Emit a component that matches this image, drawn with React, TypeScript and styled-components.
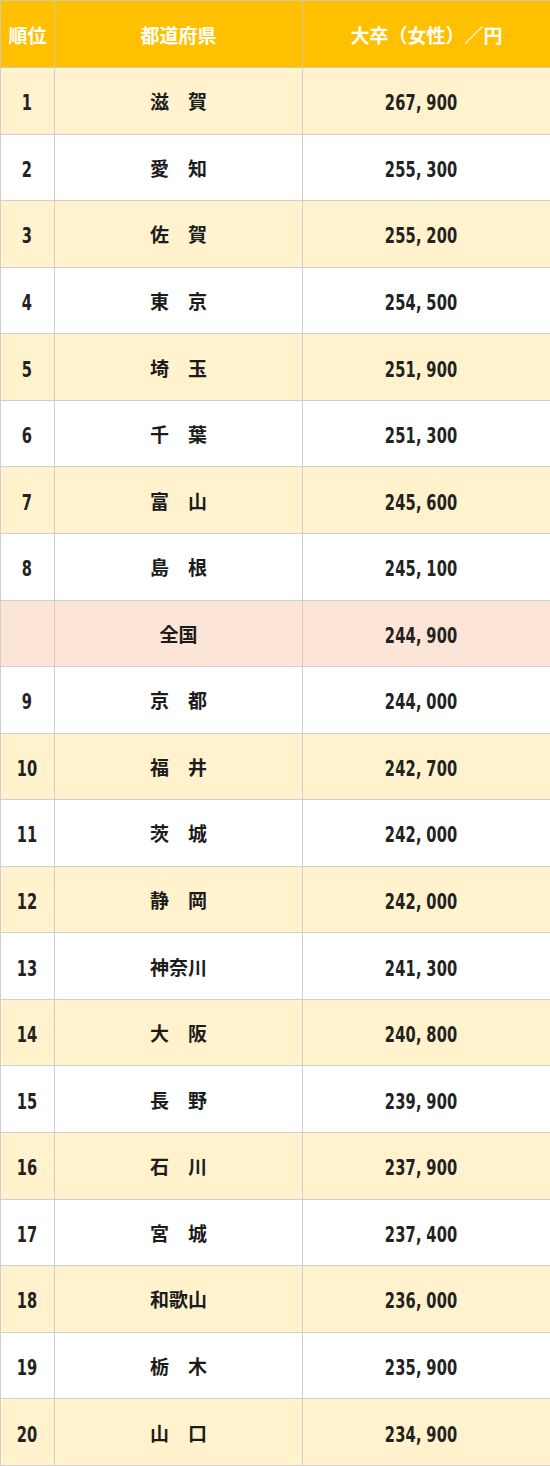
import React from 'react';
import styled, { createGlobalStyle } from 'styled-components';

const GlobalStyle = createGlobalStyle`
  html, body {
    margin: 0;
    padding: 0;
    background: #fff;
  }
`;

type Row = { rank: string; pref: string; salary: string; national?: boolean };

const rows: Row[] = [
  { rank: '1', pref: '滋　賀', salary: '267,900' },
  { rank: '2', pref: '愛　知', salary: '255,300' },
  { rank: '3', pref: '佐　賀', salary: '255,200' },
  { rank: '4', pref: '東　京', salary: '254,500' },
  { rank: '5', pref: '埼　玉', salary: '251,900' },
  { rank: '6', pref: '千　葉', salary: '251,300' },
  { rank: '7', pref: '富　山', salary: '245,600' },
  { rank: '8', pref: '島　根', salary: '245,100' },
  { rank: '', pref: '全国', salary: '244,900', national: true },
  { rank: '9', pref: '京　都', salary: '244,000' },
  { rank: '10', pref: '福　井', salary: '242,700' },
  { rank: '11', pref: '茨　城', salary: '242,000' },
  { rank: '12', pref: '静　岡', salary: '242,000' },
  { rank: '13', pref: '神奈川', salary: '241,300' },
  { rank: '14', pref: '大　阪', salary: '240,800' },
  { rank: '15', pref: '長　野', salary: '239,900' },
  { rank: '16', pref: '石　川', salary: '237,900' },
  { rank: '17', pref: '宮　城', salary: '237,400' },
  { rank: '18', pref: '和歌山', salary: '236,000' },
  { rank: '19', pref: '栃　木', salary: '235,900' },
  { rank: '20', pref: '山　口', salary: '234,900' },
];

const Table = styled.table`
  width: 550px;
  height: 1466px;
  border-collapse: collapse;
  table-layout: fixed;
`;

const HeadCell = styled.th`
  background: #ffc000;
  color: #fff;
  font-family: 'Noto Sans CJK JP', sans-serif;
  font-weight: 700;
  font-size: 19px;
  text-align: center;
  border: 1px solid #d4c8a8;
  padding: 0;
  height: 66px;
`;

const BodyRow = styled.tr<{ $tone: 'odd' | 'even' | 'national' }>`
  height: 66px;
  background: ${(p) =>
    p.$tone === 'national' ? '#fce4d6' : p.$tone === 'odd' ? '#fff2cc' : '#ffffff'};
`;

const Cell = styled.td<{ $shift?: number }>`
  border: 1px solid #cfcfcf;
  padding: 0 ${(p) => p.$shift ?? 0}px 0 0;
  text-align: center;
  color: #1c1c1c;
  font-weight: 700;
  font-family: 'Noto Sans CJK JP', sans-serif;
  font-size: 19px;
`;

/* narrow, tall digits like the original condensed face */
const Num = styled.span`
  display: inline-block;
  font-family: 'DejaVu Sans', sans-serif;
  font-stretch: condensed;
  font-weight: 700;
  font-size: 22px;
  letter-spacing: 0.3px;
  color: #222;
  transform: scaleX(0.74) translateY(1px);
`;

const Comma = styled.span`
  margin-right: 6px;
`;

function Money({ value }: { value: string }) {
  const [head, tail] = value.split(',');
  return (
    <Num>
      {head}
      <Comma>,</Comma>
      {tail}
    </Num>
  );
}

export default function App() {
  return (
    <>
      <GlobalStyle />
      <Table>
        <colgroup>
          <col style={{ width: 54 }} />
          <col style={{ width: 248 }} />
          <col style={{ width: 248 }} />
        </colgroup>
        <thead>
          <tr>
            <HeadCell>順位</HeadCell>
            <HeadCell>都道府県</HeadCell>
            <HeadCell>大卒（女性）／円</HeadCell>
          </tr>
        </thead>
        <tbody>
          {rows.map((r, i) => {
            const tone = r.national ? 'national' : i % 2 === 0 ? 'odd' : 'even';
            return (
              <BodyRow key={r.pref} $tone={tone}>
                <Cell>
                  <Num>{r.rank}</Num>
                </Cell>
                <Cell>{r.pref}</Cell>
                <Cell $shift={11}>
                  <Money value={r.salary} />
                </Cell>
              </BodyRow>
            );
          })}
        </tbody>
      </Table>
    </>
  );
}
